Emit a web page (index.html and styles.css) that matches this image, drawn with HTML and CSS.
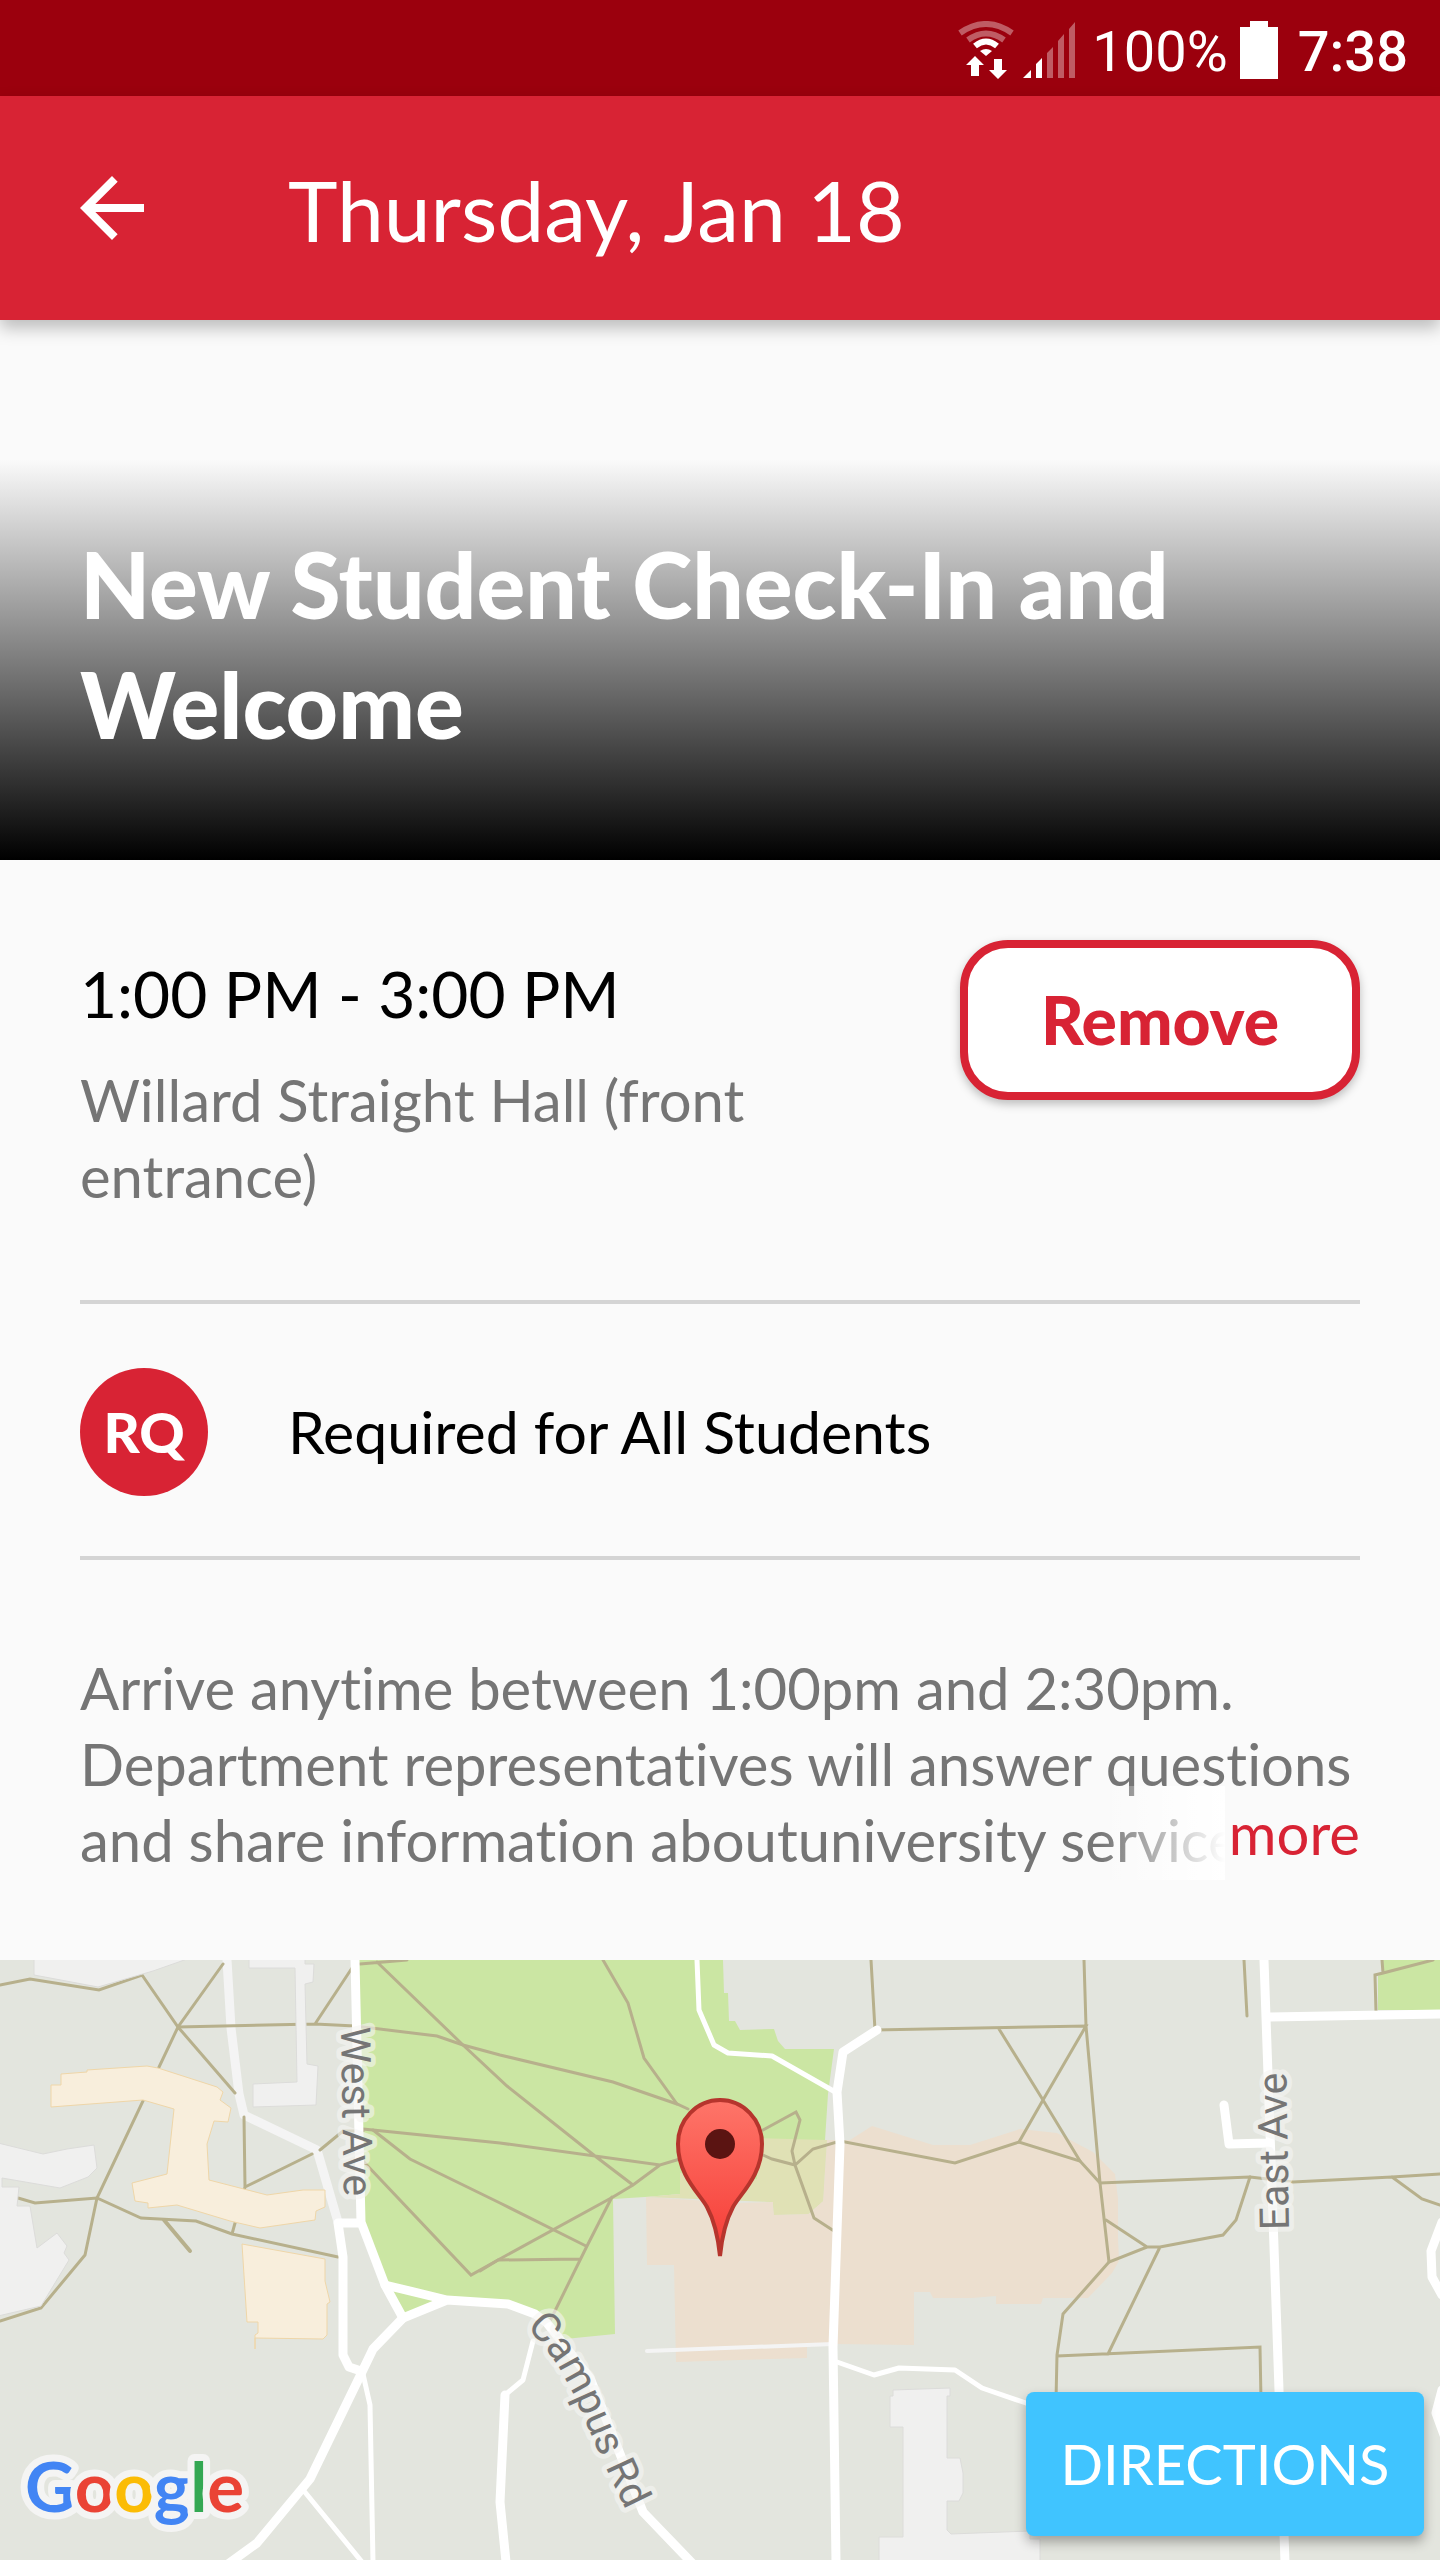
FILE: index.html
```html
<!DOCTYPE html>
<html lang="en">
<head>
<meta charset="utf-8">
<meta name="viewport" content="width=device-width, initial-scale=1">
<title>New Student Check-In and Welcome</title>
<link rel="stylesheet" href="styles.css">
</head>
<body>
<div class="screen">
  <div class="status-bar">
    <svg class="status-wifi" viewBox="0 0 56 58" aria-hidden="true">
      <g fill="none" stroke="#fff" stroke-width="6">
        <path class="dim" d="M2 12Q28 -6 54 12"/>
        <path class="dim" d="M10 19Q28 6 46 19"/>
        <path d="M17 25Q28 16 39 25"/>
      </g>
      <path fill="#fff" d="M22 30Q28 26 34 30L28 35Z"/>
      <path fill="#fff" d="M8 44L17 35L26 44H21V55H13V44ZM36 38H44V49H49L40 58L31 49H36Z"/>
    </svg>
    <svg class="status-signal" viewBox="0 0 52 56" aria-hidden="true">
      <path fill="#fff" d="M0 56L8 48V56ZM13 42L19 36V56H13Z"/>
      <path class="dim" fill="#fff" d="M24 31L30 25V56H24ZM35 19L41 12V56H35ZM46 7L52 0V56H46Z"/>
    </svg>
    <span class="battery-level">100%</span>
    <svg class="status-battery" viewBox="0 0 38 58" aria-hidden="true">
      <path fill="#fff" d="M10 0H28V6H38V58H0V6H10Z"/>
    </svg>
    <span class="clock">7:38</span>
  </div>

  <header class="app-bar">
    <button class="back" type="button" aria-label="Back">
      <svg viewBox="0 0 24 24" aria-hidden="true"><path fill="#fff" d="M20 11H7.83l5.59-5.59L12 4l-8 8 8 8 1.41-1.41L7.83 13H20z"/></svg>
    </button>
    <span class="app-title">Thursday, Jan 18</span>
  </header>

  <main>
    <div class="hero">
      <div class="hero-shade">
        <h1>New Student Check-In and Welcome</h1>
      </div>
    </div>

    <div class="details">
      <section class="when">
        <div class="when-text">
          <p class="time">1:00 PM - 3:00 PM</p>
          <p class="place">Willard Straight Hall (front entrance)</p>
        </div>
        <button class="remove" type="button">Remove</button>
      </section>

      <section class="required">
        <span class="badge">RQ</span>
        <span class="required-label">Required for All Students</span>
      </section>

      <section class="about">
        <p class="description">Arrive anytime between 1:00pm and 2:30pm. Department representatives will answer questions and share information aboutuniversity service</p>
        <div class="more-wrap">
          <span class="fade"></span>
          <button class="more" type="button">more</button>
        </div>
      </section>
    </div>

    <section class="map" aria-label="Map">
      <svg class="map-art" viewBox="0 0 1440 600" preserveAspectRatio="xMidYMid slice">
        <defs>
          <linearGradient id="pin" x1="0" y1="0" x2="0" y2="1">
            <stop offset="0" stop-color="#fe7569"/>
            <stop offset="1" stop-color="#f63b35"/>
          </linearGradient>
          <path id="campus-line" d="M526 367C556 396 570 426 584 458S604 506 632 562"/>
        </defs>
        <g class="park">
          <path d="M357 0H723L724 33H728L729 61H735L740 70L774 69L778 81L785 89H834L828 134L825 180L823 241L808 254H774L773 242L680 234L645 237L613 239L615 374L565 379L535 356L508 344L447 340L403 360L383 325L360 262L357 107Z"/>
          <path d="M1383 0H1440V50H1378V16L1383 13Z"/>
        </g>
        <path class="campus" d="M646 237L738 243L773 242L774 255L808 254L823 241L827 180L850 180L872 166L933 185L970 185L1020 169L1057 173L1093 192L1115 214L1118 239V278L1119 301L1112 313L1088 338H1043L1041 344H996V336L972 338H933L930 332H914V385L833 384L807 387V398L676 402L674 305H647Z"/>
        <path class="campus-park" d="M646 237L680 234V213L757 219V178L827 180L823 241L808 254L774 255L773 242Z"/>
        <g class="road minor">
          <path d="M227 0L231 68L239 134L244 155L317 190L338 262"/>
          <path class="thin" d="M647 391L833 384"/>
        </g>
        <g class="path">
          <path d="M0 25L30 19L99 30L142 15L178 67L235 133M223 4L178 67L97 238L85 295L41 348L0 361"/>
          <path d="M178 67L315 64L355 66L437 76L463 85L500 95L613 122L677 144L688 149M352 8L315 64"/>
          <path d="M360 4L407 0M377 2L463 85L507 126L595 196L633 225M363 169L500 183L660 205L680 199M660 205L633 225L613 237L507 295L471 315L363 201"/>
          <path d="M480 311L498 300L580 299M373 170L410 199L500 243L586 286M612 237L587 286L550 361M603 0L628 43L644 98L677 144"/>
          <path d="M763 170L796 152L800 160L792 191L795 205L814 258L834 271M763 195L772 199L795 205L813 189L840 181L955 203L1019 182L1080 201L1100 223L1250 217L1293 222L1392 217L1440 214M1392 217L1422 239L1440 245"/>
          <path d="M1250 217L1236 260L1223 275L1160 287H1147L1109 302L1063 354L1057 395L1056 440M1106 260L1147 287M1160 287L1108 394M1057 396L1260 387L1261 440"/>
          <path d="M1084 0L1086 66L1100 223L1109 302M871 0L875 70L1086 66L1043 140L1019 182M999 69L1043 140L1080 201M1244 0L1247 56M1382 0L1383 13L1433 0M1383 13L1375 15L1376 52"/>
          <path d="M18 238L35 243L97 238L141 258L196 261L232 274L338 297M232 274L245 227L244 157M245 227L312 194M320 190L343 171H363"/>
          <path class="wide" d="M164 260L190 291"/>
        </g>
        <g class="building">
          <path d="M34 -2V15L98 27L153 11L190 -2Z"/>
          <path d="M249 -2V8H295L297 122L253 124V147L316 145L318 106L307 104L305 24L313 22L314 4H305V-2Z"/>
          <path d="M-2 183L43 194L67 189L94 185L97 208L88 217L60 228L2 218V227H19L17 246H30L37 288L57 273L67 286L64 293L69 300L41 346L-2 356Z"/>
          <path d="M893 430L950 428V436H947V498H960L963 513V533L959 541H947V570L951 574L1030 571V579H1040V602H879V577H903V467H890V436H893Z"/>
        </g>
        <g class="school">
          <path d="M51 125H61V114L87 112V110L147 106L158 108L217 127L223 132L220 140L231 148L228 162L214 161L207 184L209 220L267 235L303 230H325V247L316 251L315 260L260 268L230 261L177 245L148 248V243L135 241L132 223L167 214L174 149L143 140L77 145L51 147Z"/>
          <path d="M242 284L325 299V321L330 342L327 344V375L323 379L255 378V389V375L258 373V362H247Z"/>
        </g>
        <g class="road lane">
          <path d="M363 414L370 445L373 602M304 531L362 602M533 381L523 420L505 435M837 402L874 415L899 408L955 410L982 428L1026 443L1100 463M697 0L699 50L714 85L728 93L772 96L837 133"/>
        </g>
        <g class="road">
          <path d="M355 0L361 262L385 325L403 358M338 263H361M338 263L343 297V395L349 407L361 411"/>
          <path d="M228 604L257 583L310 519L361 414L373 389L403 358L447 340L508 344L535 354L547 363L590 418L643 552L693 604M385 325L447 340M505 435L500 542L506 602"/>
          <path d="M877 70L843 92L837 132L840 184L833 387L836 602M1264 0L1285 602M1270 57L1442 54M1224 145L1229 184L1267 183"/>
          <path d="M1442 262L1431 291L1432 317L1442 335M1442 430L1436 453L1444 475"/>
        </g>
        <g class="street-name">
          <text transform="translate(341 67) rotate(89)">West Ave</text>
          <text transform="translate(1289 270) rotate(-91)">East Ave</text>
          <text><textPath href="#campus-line">Campus Rd</textPath></text>
        </g>
        <path d="M720 296C718 276 714 260 707 247C700 234 678 216 678 184A42 44 0 0 1 762 184C762 216 740 234 733 247C726 260 722 276 720 296Z" fill="url(#pin)" stroke="#b6352d" stroke-width="4"/>
        <circle cx="720" cy="184" r="15" fill="#5b1412"/>
      </svg>
      <div class="map-overlay">
        <svg class="google" viewBox="0 0 240 100" role="img" aria-label="Google">
          <text x="9" y="76"><tspan fill="#4285f4">G</tspan><tspan fill="#ea4335">o</tspan><tspan fill="#fbbc05">o</tspan><tspan fill="#4285f4">g</tspan><tspan fill="#34a853">l</tspan><tspan fill="#ea4335">e</tspan></text>
        </svg>
        <button class="directions" type="button">DIRECTIONS</button>
      </div>
    </section>
  </main>
</div>
</body>
</html>
```
FILE: styles.css
```css
* { box-sizing: border-box; }

body {
  margin: 0;
  background: #fafafa;
  color: #000;
  font-family: Lato, "Open Sans", sans-serif;
  font-size: 58px;
  line-height: 76px;
  font-variant-ligatures: none;
}

h1, p { margin: 0; }

button {
  margin: 0;
  padding: 0;
  border: 0;
  background: none;
  color: inherit;
  font: inherit;
  cursor: pointer;
}

.screen {
  display: flex;
  flex-direction: column;
  min-height: 100vh;
}

/* Status bar */
.status-bar {
  display: flex;
  align-items: center;
  justify-content: flex-end;
  height: 96px;
  padding: 4px 32px 0 0;
  background: #9b000d;
  color: #fff;
  font-family: Roboto, sans-serif;
  font-size: 56px;
  line-height: 64px;
}
.status-bar span { padding-top: 4px; }
.dim { opacity: .36; }
.status-wifi { width: 56px; height: 58px; margin-right: 9px; }
.status-signal { width: 52px; height: 56px; margin-right: 17px; }
.status-battery { width: 38px; height: 58px; margin: 0 20px 0 12px; }
.clock { font-weight: 500; }

/* App bar */
.app-bar {
  position: relative;
  display: flex;
  align-items: center;
  gap: 128px;
  height: 224px;
  padding: 0 64px;
  background: #d82334;
  color: #fff;
  box-shadow: 0 8px 16px rgba(0, 0, 0, .25);
}
.back { width: 96px; height: 96px; }
.back svg { display: block; width: 96px; height: 96px; }
.app-title { padding-top: 4px; font-size: 84px; line-height: 100px; }

main {
  display: flex;
  flex: 1;
  flex-direction: column;
}

/* Event name over the shaded banner */
.hero { padding-top: 140px; }
.hero-shade {
  padding: 64px 80px 96px;
  background: linear-gradient(#fafafa, #000);
}
h1 {
  color: #fff;
  font-size: 91px;
  font-weight: 900;
  line-height: 120px;
}

/* Details */
.details { padding: 0 80px; }
.when {
  display: flex;
  align-items: flex-start;
  justify-content: space-between;
  gap: 80px;
  padding: 80px 0 86px;
  border-bottom: 4px solid #d4d4d4;
}
.when-text { flex: 1; padding-top: 14px; }
.time { margin-bottom: 28px; font-size: 64px; line-height: 80px; }
.place, .description { color: #757575; }
.remove {
  width: 400px;
  height: 160px;
  border: 8px solid #d82334;
  border-radius: 48px;
  background: #fff;
  box-shadow: 0 4px 10px rgba(0, 0, 0, .25);
  color: #d82334;
  font-size: 66px;
  font-weight: 900;
}
.required {
  display: flex;
  align-items: center;
  gap: 80px;
  padding: 64px 0 60px;
  border-bottom: 4px solid #d4d4d4;
}
.required-label { font-size: 59px; }
.badge {
  display: grid;
  place-items: center;
  width: 128px;
  height: 128px;
  border-radius: 50%;
  background: #d82334;
  color: #fff;
  font-size: 56px;
  font-weight: 900;
}
.about { position: relative; padding: 90px 0 82px; }
.description {
  overflow: hidden;
  max-height: 228px;
}
.more-wrap {
  position: absolute;
  right: 0;
  bottom: 80px;
  display: flex;
  align-items: center;
  height: 94px;
}
.fade {
  width: 126px;
  height: 94px;
  background: linear-gradient(90deg, rgba(255, 255, 255, 0), #fff);
}
.more {
  padding-left: 4px;
  background: #fafafa;
  color: #d82334;
}

/* Map */
.map {
  position: relative;
  display: flex;
  flex: 1;
  align-items: flex-end;
  min-height: 600px;
  overflow: hidden;
  background: #e3e5de;
}
.map-art {
  position: absolute;
  inset: 0;
  width: 100%;
  height: 100%;
}
.park { fill: #cbe6a3; }
.campus { fill: #ecdfcf; }
.campus-park { fill: #e0e1b5; }
.building { fill: #f0f0ef; stroke: #dcdcda; stroke-width: 1; }
.school { fill: #f8eedc; stroke: #efd6a8; stroke-width: 1; }
.path { fill: none; stroke: #b7b08c; stroke-width: 3; stroke-linecap: round; }
.path .wide { stroke-width: 4; }
.road { fill: none; stroke: #fff; stroke-width: 9; stroke-linejoin: round; stroke-linecap: round; }
.road.lane { stroke-width: 5; }
.road.minor { stroke: #f4f4f4; }
.road.minor .thin { stroke-width: 4; }
.street-name text {
  fill: #757575;
  stroke: rgba(245, 245, 243, .6);
  stroke-width: 10;
  stroke-linejoin: round;
  paint-order: stroke;
  font-family: Roboto, sans-serif;
  font-size: 41px;
}
.map-overlay {
  position: relative;
  display: flex;
  flex: 1;
  align-items: flex-end;
  justify-content: space-between;
  padding: 0 16px 24px;
}
.google { width: 240px; height: 100px; }
.google text {
  stroke: #f4f4f3;
  stroke-width: 14;
  stroke-linejoin: round;
  paint-order: stroke;
  font-size: 69px;
  font-weight: 700;
}
.directions {
  width: 398px;
  height: 144px;
  border-radius: 8px;
  background: #40c4ff;
  box-shadow: 0 6px 12px rgba(0, 0, 0, .3);
  color: #fff;
  font-size: 56px;
}
```
